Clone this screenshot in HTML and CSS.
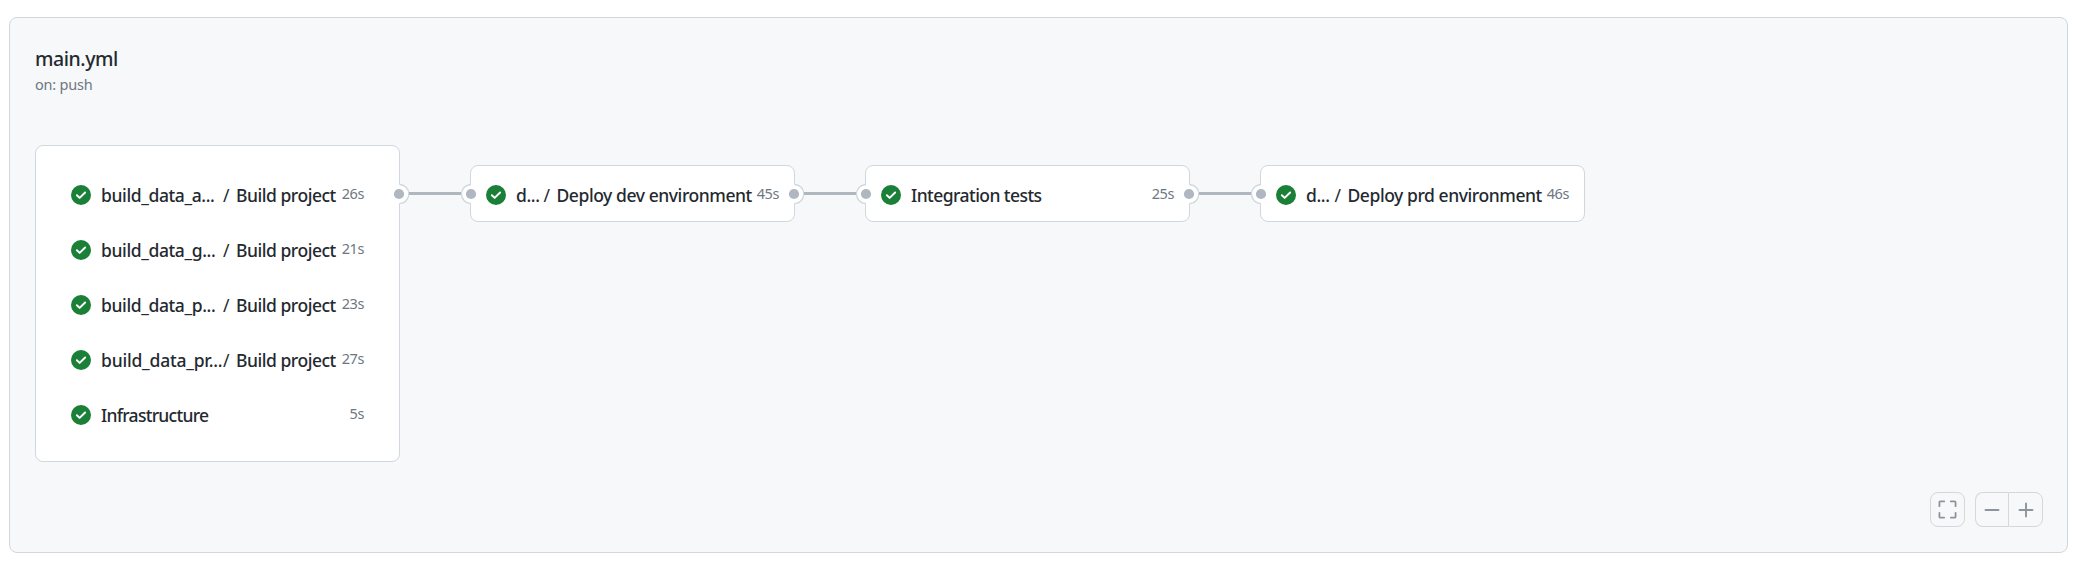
FILE: index.html
```html
<!DOCTYPE html>
<html lang="en">
<head>
<meta charset="utf-8">
<title>main.yml</title>
<link rel="stylesheet" href="styles.css">
</head>
<body>
<svg class="defs" aria-hidden="true">
  <symbol id="check" viewBox="0 0 16 16"><circle cx="8" cy="8" r="8" fill="#1a7f37"/><path d="M4.7 8.2 6.9 10.3 11.3 6" fill="none" stroke="#fff" stroke-width="1.6" stroke-linecap="round" stroke-linejoin="round"/></symbol>
  <symbol id="port-out" viewBox="0 0 20 20"><path d="M9 .5h1.500a9.500 9.500 0 0 1 0 19H9z" fill="#fff"/><path d="M10.500 .5a9.300 9.500 0 0 1 0 19" fill="none" stroke="#d0d7de" stroke-width="1.25"/><circle cx="10" cy="10" r="5.1" fill="#afb8c1"/></symbol>
  <symbol id="port-in" viewBox="0 0 20 20"><path d="M11 .5h-1a9.5 9.5 0 0 0 0 19h1z" fill="#fff"/><path d="M10 .5a9.5 9.5 0 0 0 0 19" fill="none" stroke="#d0d7de" stroke-width="1.25"/><circle cx="10" cy="10" r="5.1" fill="#afb8c1"/></symbol>
</svg>
<main class="panel">
  <header class="head">
    <h1 class="title">main.yml</h1>
    <p class="trigger">on: push</p>
  </header>
  <section class="graph">
    <div class="card group">
      <div class="row"><svg class="icon"><use href="#check"/></svg><span class="name">build_data_a...</span><span class="slash">/</span><span class="job">Build project</span><span class="time">26s</span></div>
      <div class="row"><svg class="icon"><use href="#check"/></svg><span class="name">build_data_g...</span><span class="slash">/</span><span class="job">Build project</span><span class="time">21s</span></div>
      <div class="row"><svg class="icon"><use href="#check"/></svg><span class="name">build_data_p...</span><span class="slash">/</span><span class="job">Build project</span><span class="time">23s</span></div>
      <div class="row"><svg class="icon"><use href="#check"/></svg><span class="name full">build_data_pr...</span><span class="slash">/</span><span class="job">Build project</span><span class="time">27s</span></div>
      <div class="row"><svg class="icon"><use href="#check"/></svg><span class="name infra">Infrastructure</span><span class="time">5s</span></div>
      <svg class="port out"><use href="#port-out"/></svg>
    </div>
    <div class="link"></div>
    <div class="card single">
      <div class="row"><svg class="icon"><use href="#check"/></svg><span class="name short dev">d...</span><span class="slash">/</span><span class="job deploy">Deploy dev environment</span><span class="time">45s</span></div>
      <svg class="port in"><use href="#port-in"/></svg>
      <svg class="port out"><use href="#port-out"/></svg>
    </div>
    <div class="link"></div>
    <div class="card single">
      <div class="row"><svg class="icon"><use href="#check"/></svg><span class="name tests">Integration tests</span><span class="time">25s</span></div>
      <svg class="port in"><use href="#port-in"/></svg>
      <svg class="port out"><use href="#port-out"/></svg>
    </div>
    <div class="link"></div>
    <div class="card single">
      <div class="row"><svg class="icon"><use href="#check"/></svg><span class="name short">d...</span><span class="slash">/</span><span class="job deploy">Deploy prd environment</span><span class="time">46s</span></div>
      <svg class="port in"><use href="#port-in"/></svg>
    </div>
  </section>
  <footer class="controls">
    <button class="btn" aria-label="Fit"><svg width="19" height="19" viewBox="0 0 20 20"><path d="M1.500 6.500V2.500a1 1 0 0 1 1-1h4M13.500 1.500h4a1 1 0 0 1 1 1v4M18.500 13.500v4a1 1 0 0 1-1 1h-4M6.500 18.500h-4a1 1 0 0 1-1-1v-4"/></svg></button>
    <div class="zoom">
      <button class="btn" aria-label="Zoom out"><svg width="20" height="20" viewBox="0 0 20 20"><path d="M3.500 10h13"/></svg></button>
      <button class="btn" aria-label="Zoom in"><svg width="20" height="20" viewBox="0 0 20 20"><path d="M3.500 10h13M10 3.500v13"/></svg></button>
    </div>
  </footer>
</main>
</body>
</html>
```
FILE: styles.css
```css
* { box-sizing: border-box; }
body {
  margin: 0;
  padding: 17px 13px 11px 9px;
  height: 564px;
  background: #fff;
  color: #24292f;
  font-family: "Noto Sans", "Open Sans", sans-serif;
}
.defs { display: none; }
.panel {
  display: flex;
  flex-direction: column;
  height: 536px;
  padding: 26px 24px 25px 25px;
  border: 1px solid #d0d7de;
  border-radius: 8px;
  background: #f6f8fa;
}
.head { height: 101px; }
.title {
  margin: 0;
  font-size: 19.5px;
  line-height: 30px;
  font-weight: 500;
  letter-spacing: -0.45px;
}
.trigger {
  margin: 0;
  font-size: 14.5px;
  line-height: 20px;
  letter-spacing: -0.2px;
  color: #6e7781;
}
.graph { display: flex; align-items: flex-start; flex: 1; }
.card {
  position: relative;
  flex: none;
  border: 1px solid #d0d7de;
  border-radius: 8px;
  background: #fff;
}
.group { width: 365px; height: 317px; padding: 21px 35px; }
.single { width: 325px; height: 57px; margin-top: 20px; padding: 1px 15px; }
.row { display: flex; align-items: center; height: 55px; }
.icon { flex: none; width: 20px; height: 20px; margin-right: 10px; }
.name, .job, .slash {
  flex: none;
  font-size: 17.5px;
  line-height: 26px;
  font-weight: 500;
  white-space: nowrap;
}
.name { width: 122px; letter-spacing: -0.38px; }
.full { letter-spacing: -0.2px; }
.short { width: 28.5px; }
.dev { width: 27.5px; }
.infra { width: auto; letter-spacing: -0.72px; }
.tests { width: auto; letter-spacing: -0.55px; }
.slash { width: 13px; font-weight: 400; }
.job { letter-spacing: -0.47px; }
.deploy { letter-spacing: -0.43px; }
.time {
  margin-left: auto;
  font-size: 14.5px;
  line-height: 22px;
  letter-spacing: -0.4px;
  color: #6e7781;
  margin-top: -3px;
}
.link { flex: none; width: 70px; height: 3px; margin-top: 47px; background: #afb8c1; }
.port { position: absolute; width: 20px; height: 20px; }
.group .port { top: 38px; }
.single .port { top: 18px; }
.out { right: -10px; }
.in { left: -10px; }
.controls { display: flex; justify-content: flex-end; gap: 10px; height: 35px; }
.btn {
  display: flex;
  align-items: center;
  justify-content: center;
  width: 35px;
  height: 35px;
  padding: 0;
  border: 1px solid #d4d8dc;
  border-radius: 8px;
  background: #f6f8fa;
}
.btn svg { fill: none; stroke: #8c959f; stroke-width: 1.9; stroke-linecap: round; }
.zoom { display: flex; }
.zoom .btn:first-child { width: 33px; border-right: 0; border-radius: 8px 0 0 8px; }
.zoom .btn:last-child { border-radius: 0 8px 8px 0; }
```
